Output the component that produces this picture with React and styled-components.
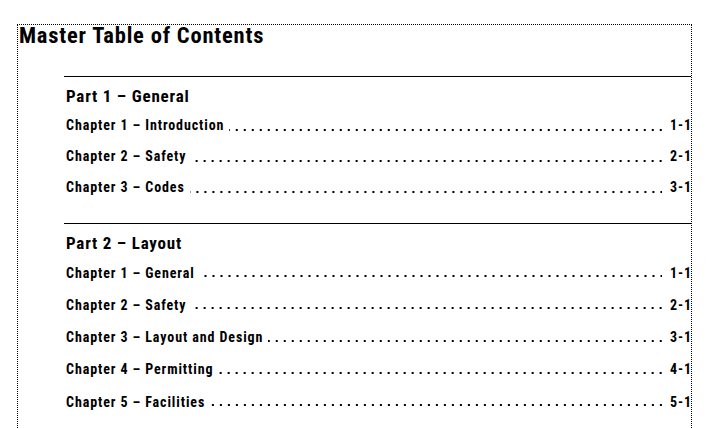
import React from 'react';
import styled, { createGlobalStyle } from 'styled-components';

const GlobalStyle = createGlobalStyle`
    html, body {
        margin: 0;
        padding: 0;
        background: #fff;
    }
    body {
        font-family: "Roboto Condensed", "Liberation Sans", sans-serif;
        color: #000;
    }
`

const Page = styled.div`
    padding: 24px 0 0 17px;
    height: 428px;
    box-sizing: border-box;
    overflow: hidden;
`

const Frame = styled.div`
    width: 675px;
    min-height: 420px;
    box-sizing: border-box;
    border: 1px dotted #000;
    border-bottom: none;
`

const Title = styled.h1`
    margin: -3px 0 0 1px;
    font-size: 22.5px;
    line-height: 26px;
    letter-spacing: 0.8px;
    font-weight: bold;
`

const Section = styled.section`
    margin: ${p => p.first ? '28px' : '0'} 0 0 46px;
    border-top: 1px solid #000;
    padding: 10px 0 ${p => p.first ? '19.5px' : '0'} 2px;
`

const PartHeading = styled.h2`
    margin: 0 0 5px;
    font-size: 17px;
    line-height: 18px;
    letter-spacing: 0.8px;
    font-weight: bold;
`

const Row = styled.div`
    display: flex;
    align-items: baseline;
    height: ${p => p.spacing}px;
    line-height: ${p => p.spacing}px;
    font-size: 14px;
    letter-spacing: 0.9px;
    font-weight: bold;
`

const ChapterName = styled.span`
    white-space: nowrap;
`

const Leader = styled.span`
    flex: 1;
    align-self: stretch;
    margin: 0 8px 0 5px;
    background-image: linear-gradient(to right, transparent 6px, #000 6px);
    background-size: 8px 2px;
    background-repeat: repeat-x;
    background-position: right 0 bottom ${p => p.spacing - 20.5}px;
`

const PageNo = styled.span`
    white-space: nowrap;
    margin-right: -1px;
`

const parts = [
    {
        title: 'Part 1 – General',
        spacing: 31,
        chapters: [
            ['Chapter 1 – Introduction', '1-1'],
            ['Chapter 2 – Safety', '2-1'],
            ['Chapter 3 – Codes', '3-1'],
        ],
    },
    {
        title: 'Part 2 – Layout',
        spacing: 32.25,
        chapters: [
            ['Chapter 1 – General', '1-1'],
            ['Chapter 2 – Safety', '2-1'],
            ['Chapter 3 – Layout and Design', '3-1'],
            ['Chapter 4 – Permitting', '4-1'],
            ['Chapter 5 – Facilities', '5-1'],
        ],
    },
];

export default function App() {
    return (
        <Page>
            <GlobalStyle />
            <Frame>
                <Title>Master Table of Contents</Title>
                {parts.map((part, i) => (
                    <Section key={part.title} first={i === 0}>
                        <PartHeading>{part.title}</PartHeading>
                        {part.chapters.map(([name, page]) => (
                            <Row key={name} spacing={part.spacing}>
                                <ChapterName>{name}</ChapterName>
                                <Leader spacing={part.spacing} />
                                <PageNo>{page}</PageNo>
                            </Row>
                        ))}
                    </Section>
                ))}
            </Frame>
        </Page>
    );
}
